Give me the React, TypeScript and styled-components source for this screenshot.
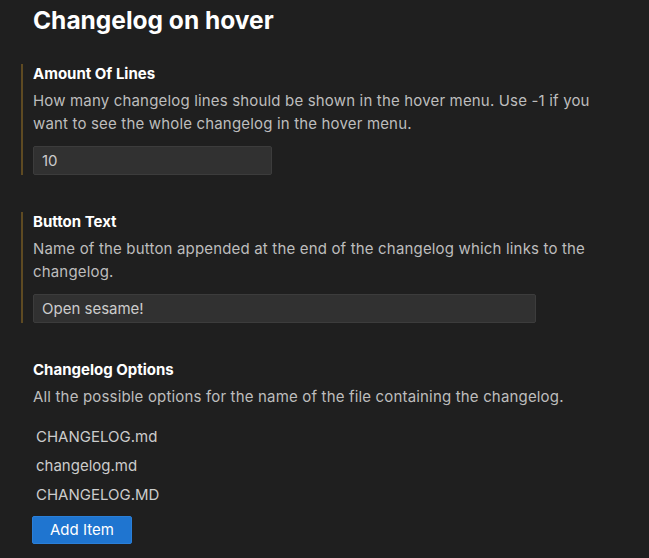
import styled, { createGlobalStyle } from "styled-components";

const GlobalStyle = createGlobalStyle`
  html, body {
    margin: 0;
    padding: 0;
    background: #1f1f1f;
  }
  body {
    font-family: Inter, "Liberation Sans", Arial, sans-serif;
    color: #cccccc;
  }
`;

type Setting = {
  title: string;
  description: string;
  value: string;
  wide?: boolean;
};

const settings: Setting[] = [
  {
    title: "Amount Of Lines",
    description:
      "How many changelog lines should be shown in the hover menu. Use -1 if you want to see the whole changelog in the hover menu.",
    value: "10",
  },
  {
    title: "Button Text",
    description:
      "Name of the button appended at the end of the changelog which links to the changelog.",
    value: "Open sesame!",
    wide: true,
  },
];

const options = ["CHANGELOG.md", "changelog.md", "CHANGELOG.MD"];

const App = () => {
  return (
    <>
      <GlobalStyle />
      <Page>
        <Title>Changelog on hover</Title>
        {settings.map((s) => (
          <Item key={s.title} $modified>
            <ItemTitle>{s.title}</ItemTitle>
            <Description>{s.description}</Description>
            <TextInput $wide={s.wide} defaultValue={s.value} />
          </Item>
        ))}
        <Item>
          <ItemTitle>Changelog Options</ItemTitle>
          <Description>
            All the possible options for the name of the file containing the
            changelog.
          </Description>
          <List>
            {options.map((o) => (
              <ListRow key={o}>{o}</ListRow>
            ))}
          </List>
          <AddButton>Add Item</AddButton>
        </Item>
      </Page>
    </>
  );
};

export default App;

const Page = styled.div`
  width: 649px;
  height: 558px;
  box-sizing: border-box;
  padding: 5px 0 0 21px;
  overflow: hidden;
  display: flex;
  flex-direction: column;
`;

const Title = styled.h1`
  margin: 0 0 29px 12px;
  font-size: 24.5px;
  line-height: 30px;
  font-weight: bold;
  color: #ffffff;
`;

const Item = styled.div<{ $modified?: boolean }>`
  border-left: 2px solid ${(p) => (p.$modified ? "#5e4a22" : "transparent")};
  padding: 0 0 0 10px;
  margin-bottom: 37px;
  display: flex;
  flex-direction: column;
  align-items: flex-start;
`;

const ItemTitle = styled.div`
  font-size: 15px;
  line-height: 20px;
  font-weight: bold;
  color: #ffffff;
`;

const Description = styled.div`
  font-size: 15px;
  line-height: 22.5px;
  letter-spacing: 0.17px;
  color: #bdbdbd;
  margin-top: 6px;
  max-width: 580px;
`;

const TextInput = styled.input<{ $wide?: boolean }>`
  margin-top: 11px;
  width: ${(p) => (p.$wide ? "503px" : "239px")};
  height: 29px;
  box-sizing: border-box;
  background: #313131;
  border: 1px solid #3c3c3c;
  border-radius: 2px;
  color: #cccccc;
  font-family: Inter, "Liberation Sans", Arial, sans-serif;
  font-size: 15px;
  padding: 0 8px;
  outline: none;
`;

const List = styled.div`
  margin-top: 13px;
  display: flex;
  flex-direction: column;
`;

const ListRow = styled.div`
  height: 29px;
  line-height: 29px;
  padding-left: 3px;
  font-size: 15px;
  color: #cccccc;
`;

const AddButton = styled.button`
  margin-top: 7px;
  margin-left: -1px;
  height: 28px;
  padding: 0 17px;
  background: #1f75d0;
  border: 1px solid #2a7fd8;
  border-radius: 2px;
  color: #ffffff;
  font-family: Inter, "Liberation Sans", Arial, sans-serif;
  font-size: 15px;
  cursor: pointer;
`;
